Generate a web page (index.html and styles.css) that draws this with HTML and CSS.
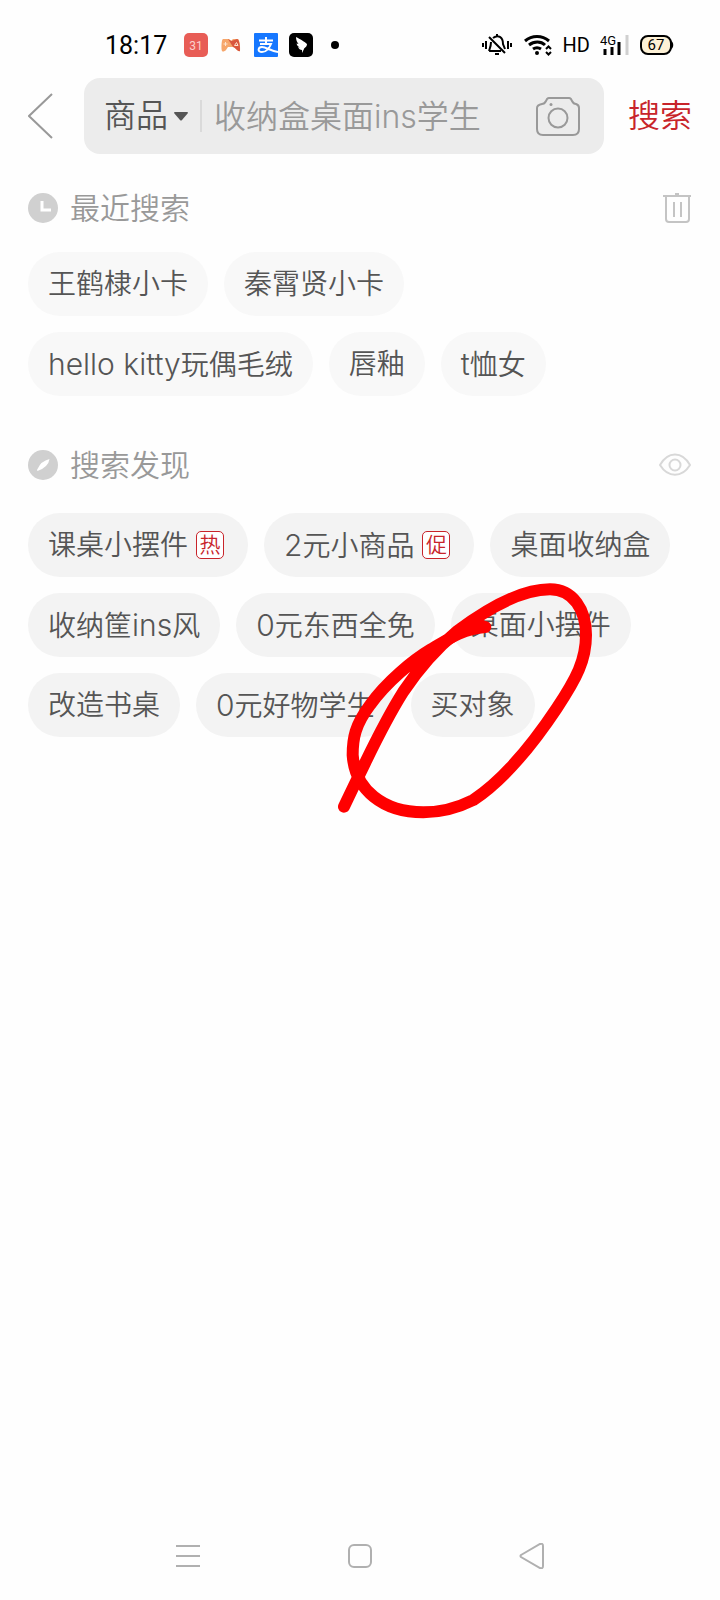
FILE: index.html
```html
<!DOCTYPE html>
<html lang="zh-CN">
<head>
<meta charset="utf-8">
<meta name="viewport" content="width=device-width, initial-scale=1">
<title>搜索</title>
<link rel="stylesheet" href="styles.css">
</head>
<body>
<div class="page">
  <div class="status">
    <div class="status-left">
      <span class="clock">18:17</span>
      <svg width="24" height="24" viewBox="0 0 24 24"><rect width="24" height="24" rx="5" fill="#e85d56"/><text x="12" y="17" text-anchor="middle" class="cal">31</text></svg>
      <svg width="24" height="24" viewBox="0 0 24 24"><path d="M4 6h6l2 2 2-2h5c1.500 0 2.500 9 2 12-2 1-4-2-5.500-4H9l-2 3c-1.500 1.500-3 2-4 1C2 16 2.500 6 4 6z" fill="#f6a66b"/><path d="M9 6l3.500 2L18 6c2 0 3 5 3 12-2 1-4-3-7-4z" fill="#d9573f"/><path d="M4.500 11h4M6.500 9v4M15.500 12.500l2-3 1.500 3z" stroke="#fde3cf" fill="none"/></svg>
      <svg width="24" height="24" viewBox="0 0 24 24"><rect width="24" height="24" rx="1" fill="#1677ff"/><path d="M5 7.500h14M12 4v7M6 11h11c-1.500 4-5 8-9 8-5 0-4-5 0-5s9 4 16 5" stroke="#fff" stroke-width="2" fill="none"/></svg>
      <svg width="24" height="24" viewBox="0 0 24 24"><rect width="24" height="24" rx="5" fill="#000"/><path d="M7 4c4 2 9 5 11 7 0 3-3 4-3 5l-2 4v-3c-2 0-3-1-4-3l2 .5c-2-1-3-2-3.500-4l2 .6C8 9 7 7 7 4z" fill="#fff"/></svg>
      <svg width="24" height="24" viewBox="0 0 24 24"><circle cx="11" cy="12" r="4" fill="#000"/></svg>
    </div>
    <div class="status-right">
      <svg width="32" height="24" viewBox="0 0 32 24" fill="none" stroke="#000" stroke-width="2"><path d="M2 10v4M5 8v8M27 8v8M30 10v4M12 5c5-4 10-1 10 6l2 5M8 18h12M10 9c0 4-1 6-2 9M8 4l16 16M14 21h4M16 1v2"/></svg>
      <svg width="30" height="24" viewBox="0 0 30 24" fill="none" stroke="#000" stroke-width="3"><path d="M2 8c7-6 17-6 24 0M6 12c5-4 12-4 16 0M10 16c3-2 5-2 8 0"/><circle cx="14" cy="20" r="1" stroke-width="2"/><path d="M23 16l2.500-2.500L28 16M23 19l2.500 2.500L28 19" stroke-width="2"/></svg>
      <span class="hd">HD</span>
      <svg width="30" height="24" viewBox="0 0 30 24"><text x="0" y="12" class="net">4G</text><path d="M5 16v6M12 14v8M19 9v13" stroke="#000" stroke-width="3"/><path d="M27 2v20" stroke="#d0d0d0" stroke-width="3"/></svg>
      <svg width="34" height="20" viewBox="0 0 34 20"><rect x="1" y="1" width="30" height="18" rx="7" fill="#fdf1d6" stroke="#000" stroke-width="2"/><path d="M31 6c3 1 3 7 0 8z"/><text x="16" y="15" text-anchor="middle" class="batt">67</text></svg>
    </div>
  </div>

  <header class="top">
    <button class="back" aria-label="返回"><svg width="26" height="46" viewBox="0 0 26 46" fill="none" stroke="#999" stroke-width="2"><path d="M24 1L1 23l23 22"/></svg></button>
    <div class="field">
      <button class="kind">商品<svg width="14" height="9" viewBox="0 0 14 9"><path d="M0 1q0-1 1-1h12q1 0 1 1L8 8q-1 1-2 0z" fill="#555"/></svg></button>
      <span class="bar"></span>
      <input class="query" type="text" aria-label="搜索商品" placeholder="收纳盒桌面ins学生">
      <button class="camera" aria-label="拍照搜索"><svg width="44" height="39" viewBox="0 0 44 39" fill="none" stroke="#999" stroke-width="2"><path d="M6 7c2 0 3-1 4-3l1-2q1-1 2-1h20q1 0 2 1l1 2c1 2 2 3 4 3q3 1 3 4v21q0 6-6 6H7q-6 0-6-6V11q0-3 5-4z"/><circle cx="22" cy="21" r="9.500"/><circle cx="15" cy="7.500" r="1.500" fill="#999" stroke="none"/></svg></button>
    </div>
    <button class="go">搜索</button>
  </header>

  <main class="content">
    <section class="group recent">
      <div class="head">
        <svg width="30" height="30" viewBox="0 0 30 30"><circle cx="15" cy="15" r="15" fill="#d0d0d0"/><path d="M14 8v9H23" fill="none" stroke="#fff" stroke-width="3"/></svg>
        <h2>最近搜索</h2>
        <button aria-label="清空"><svg width="30" height="30" viewBox="0 0 30 30" fill="none" stroke="#c4c4c4" stroke-width="2"><path d="M1 3h28M4 3v23q0 3 3 3h17q3 0 3-3V3M12 9v15M19 9v15"/><path d="M13 1h4" stroke-width="2"/></svg></button>
      </div>
      <div class="chips">
        <button>王鹤棣小卡</button>
        <button>秦霄贤小卡</button>
        <button><span class="latin">hello kitty</span>玩偶毛绒</button>
        <button>唇釉</button>
        <button><span class="latin">t</span>恤女</button>
      </div>
    </section>
    <section class="group found">
      <div class="head">
        <svg width="30" height="30" viewBox="0 0 30 30"><circle cx="15" cy="15" r="15" fill="#d0d0d0"/><path d="M21.500 9q-1 8-12 12-1-1 0-2Q13 11 21.500 9z" fill="#fff"/></svg>
        <h2>搜索发现</h2>
        <button aria-label="隐藏"><svg width="34" height="24" viewBox="0 0 34 24" fill="none" stroke="#d8d8d8" stroke-width="2"><path d="M2 12C10-2 24-2 32 12 24 25 10 25 2 12z"/><circle cx="17" cy="12" r="5.500"/></svg></button>
      </div>
      <div class="chips">
        <button class="tagged">课桌小摆件<span class="tag">热</span></button>
        <button class="tagged"><span><span class="latin">2</span>元小商品</span><span class="tag">促</span></button>
        <button>桌面收纳盒</button>
        <button>收纳筐<span class="latin">ins</span>风</button>
        <button><span class="latin">0</span>元东西全免</button>
        <button>桌面小摆件</button>
        <button>改造书桌</button>
        <button><span class="latin">0</span>元好物学生</button>
        <button>买对象</button>
      </div>
    </section>
  </main>

  <svg class="scribble" width="360" height="270" viewBox="0 0 1080 810" fill="none" stroke="#f00" stroke-width="36" stroke-linecap="round" stroke-linejoin="round"><path d="M496 201C430 205 380 240 330 270C280 300 200 365 150 435C105 495 98 535 98 585C105 690 190 757 310 757C365 757 420 740 460 720C550 660 640 550 710 445C770 355 798 300 798 225C798 150 760 88 690 88C600 88 490 155 410 215C350 265 300 320 250 395C190 490 145 590 115 650L72 740"/><path d="M485 197L420 214L350 262"/></svg>

  <nav class="keys">
    <button aria-label="菜单"><svg width="26" height="26" viewBox="0 0 26 26" stroke="#b0b0b0" stroke-width="2"><path d="M1 3h24M1 13h24M1 23h24"/></svg></button>
    <button aria-label="主页"><svg width="26" height="26" viewBox="0 0 26 26" fill="none" stroke="#b0b0b0" stroke-width="2"><rect x="2" y="2" width="22" height="22" rx="5"/></svg></button>
    <button aria-label="返回"><svg width="26" height="26" viewBox="0 0 26 26" fill="none" stroke="#b0b0b0" stroke-width="2"><path d="M2 12L21 1q3-1 3 2v20q0 3-3 2L2 14q-1-1 0-2z"/></svg></button>
  </nav>
</div>
</body>
</html>
```
FILE: styles.css
```css
* { box-sizing: border-box; }
body {
  margin: 0;
  background: #fefefe;
  color: #555;
  font-family: Inter, "Noto Sans CJK SC", sans-serif;
  font-weight: 350;
}
button {
  margin: 0;
  padding: 0;
  border: 0;
  background: none;
  color: inherit;
  font: inherit;
  white-space: nowrap;
}
svg { display: block; flex: none; }
.page {
  position: relative;
  display: flex;
  flex-direction: column;
  min-height: 100vh;
}
.status {
  display: flex;
  justify-content: space-between;
  align-items: center;
  height: 78px;
  padding: 12px 46px 0 105px;
  color: #000;
  font-family: Roboto, sans-serif;
  font-weight: 400;
}
.status-left { display: flex; align-items: center; gap: 11px; }
.status-right { display: flex; align-items: center; gap: 10px; }
.clock { width: 68px; font-size: 25px; }
.hd { font-size: 20px; }
.cal { font-size: 12px; fill: #fbd0cc; }
.net { font-size: 13px; }
.batt { font-size: 15px; }
.top {
  display: flex;
  align-items: center;
  padding: 0 28px;
  font-size: 32px;
}
.back { flex: none; width: 56px; }
.field {
  flex: 1;
  display: flex;
  align-items: center;
  min-width: 0;
  height: 76px;
  padding: 0 24px 0 20px;
  border-radius: 16px;
  background: #ececec;
}
.kind { display: flex; align-items: center; gap: 6px; line-height: 44px; }
.bar { width: 2px; height: 32px; margin: 0 12px; background: #dadada; }
.query {
  flex: 1;
  min-width: 0;
  height: 44px;
  padding: 0;
  border: 0;
  background: none;
  color: #555;
  font: inherit;
}
.query::placeholder { color: #999; opacity: 1; }
.go { flex: none; margin-left: 24px; color: #c8242a; line-height: 44px; }
.content { padding: 0 28px; }
.recent { padding-top: 32px; }
.found { padding-top: 47px; }
.head { display: flex; align-items: center; height: 44px; margin-bottom: 22px; }
.found .head { margin-bottom: 26px; }
.head h2 {
  flex: 1;
  margin: 0 0 0 12px;
  color: #999;
  font-size: 30px;
  font-weight: 350;
  line-height: 44px;
}
.chips { display: flex; flex-wrap: wrap; gap: 16px; }
.chips button {
  height: 64px;
  padding: 0 20px;
  border-radius: 32px;
  background: #f3f3f3;
  font-size: 28px;
  line-height: 40px;
}
.recent .chips button { background: #f8f8f8; }
.chips .tagged { display: flex; align-items: center; gap: 8px; padding-right: 24px; }
.latin { font-size: 30px; }
.tag {
  width: 28px;
  height: 28px;
  border: 1px solid #c8242a;
  border-radius: 5px;
  background: #fff;
  color: #c8242a;
  font-size: 21px;
  line-height: 26px;
  text-align: center;
}
.scribble { position: absolute; top: 560px; left: 320px; pointer-events: none; }
.keys {
  display: flex;
  justify-content: center;
  gap: 146px;
  margin-top: auto;
  padding: 0 0 31px;
}
```
